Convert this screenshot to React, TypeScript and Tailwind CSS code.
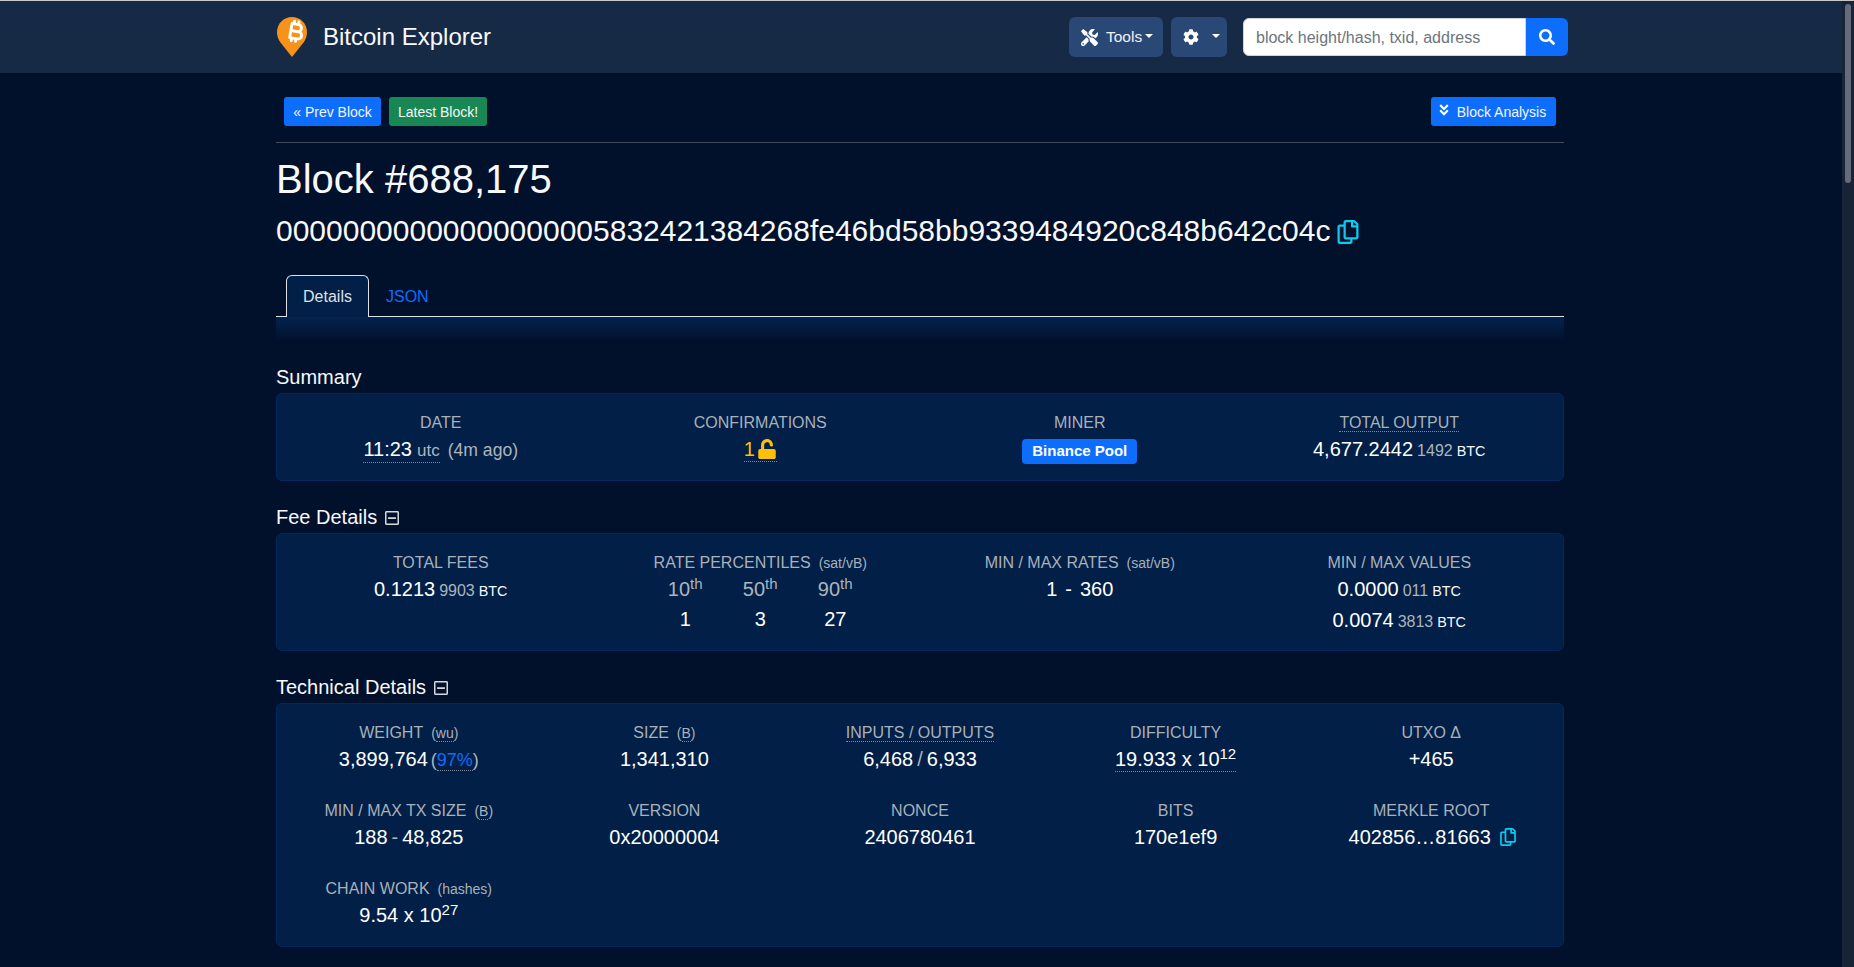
import { type ReactNode } from "react"
import { FaAngleDoubleDown, FaCog, FaRegCopy, FaRegMinusSquare, FaSearch, FaTools, FaUnlock } from "react-icons/fa"
import { FaBitcoinSign } from "react-icons/fa6"

function Caret() {
  return <span className="inline-block w-0 h-0 -mt-0.5 border-x-[4px] border-x-transparent border-t-[4px] border-t-white" />
}

function Label({ children, unit, dotted, unitDotted }: { children: ReactNode; unit?: string; dotted?: boolean; unitDotted?: boolean }) {
  return (
    <div className="text-[16px] leading-6 text-[#a9b1ba] whitespace-nowrap">
      <span className={dotted ? "border-b border-dotted border-[#7f8a99]" : ""}>{children}</span>
      {unit && (
        <span className="ml-2 text-[14px]">
          {unitDotted ? (
            <>
              (<span className="border-b border-dotted border-[#7f8a99]">{unit}</span>)
            </>
          ) : (
            `(${unit})`
          )}
        </span>
      )}
    </div>
  )
}

function Btc({ main, rest }: { main: string; rest: string }) {
  return (
    <span className="whitespace-nowrap">
      {main}
      <span className="ml-1 text-[16px] text-[#adb5bd]">{rest}</span>
      <span className="ml-1 text-[14.4px] text-[#f8f9fa]">BTC</span>
    </span>
  )
}

function SectionTitle({ children, toggle }: { children: ReactNode; toggle?: boolean }) {
  return (
    <div className="flex items-center gap-[7px] text-[20px] leading-6 text-[#f8f9fa]">
      {children}
      {toggle && <FaRegMinusSquare size={16} className="text-[#d5d9de] mt-0.5" />}
    </div>
  )
}

function Stat({ label, unit, dotted, unitDotted, children }: { label: string; unit?: string; dotted?: boolean; unitDotted?: boolean; children: ReactNode }) {
  return (
    <div className="text-center">
      <Label unit={unit} dotted={dotted} unitDotted={unitDotted}>{label}</Label>
      <div className="mt-[2px] text-[20px] leading-6 text-white">{children}</div>
    </div>
  )
}

const cardClass = "mt-1 rounded-[6px] border border-[#03285c] bg-[#011f47] px-1 pt-[17px] text-center"

export default function App() {
  return (
    <div className="flex h-screen overflow-hidden bg-[#01102b] font-['Liberation_Sans',Arial,sans-serif] text-white">
      <div className="flex-1 min-w-0">
        {/* Navbar */}
        <nav className="h-[73px] border-t border-[#c8c8c8] bg-[#172a45]">
          <div className="w-[1288px] ml-[276px] h-full flex items-center">
            <div className="relative w-[30px] h-[40px] ml-px mr-[16px]">
              <svg viewBox="0 0 30 40" className="w-[30px] h-[40px]">
                <path d="M15 0C6.7 0 0 6.7 0 15c0 4.2 1.4 7.4 3.5 10.6L15 40l11.5-14.4C28.6 22.4 30 19.2 30 15 30 6.7 23.3 0 15 0z" fill="#f7931a" />
              </svg>
              <FaBitcoinSign size={23} className="absolute left-[8px] top-[3px] rotate-[10deg] text-[#fff]" />
            </div>
            <span className="text-[24px] text-[#f8f9fa]">Bitcoin Explorer</span>
            <div className="ml-auto -mr-1 flex items-center">
              <button className="h-[40px] w-[94px] pl-3 rounded-[6px] bg-[#2a4875] flex items-center text-[15.5px] text-[#f0f3f7]">
                <FaTools size={17} className="text-white mr-2" />
                Tools
                <span className="ml-[3px] flex"><Caret /></span>
              </button>
              <button className="ml-2 h-[40px] w-[56px] pl-3 rounded-[6px] bg-[#2a4875] flex items-center gap-[13px]">
                <FaCog size={16} className="text-white" />
                <Caret />
              </button>
              <div className="ml-4 flex h-[38px]">
                <div className="w-[283px] rounded-l-[6px] bg-white border border-[#ced4da] flex items-center pl-3 pt-px text-[16px] text-[#6c757d]">
                  block height/hash, txid, address
                </div>
                <button className="w-[42px] rounded-r-[6px] bg-[#0d6efd] flex items-center justify-center">
                  <FaSearch size={16} className="text-white" />
                </button>
              </div>
            </div>
          </div>
        </nav>

        <div className="w-[1288px] ml-[276px]">
          {/* Block nav buttons */}
          <div className="mt-6 pb-4 px-2 flex gap-2 border-b border-[#3f4a5c] text-[14px] text-[#f4f6f9]">
            <button className="h-[29px] w-[97px] pt-px rounded-[3px] bg-[#0d6efd]">« Prev Block</button>
            <button className="h-[29px] w-[98px] pt-px rounded-[3px] bg-[#198754]">Latest Block!</button>
            <button className="ml-auto h-[29px] w-[125px] pt-px pr-[4px] rounded-[3px] bg-[#0d6efd] flex items-center justify-center gap-[6px]">
              <FaAngleDoubleDown size={14} className="text-white -mt-1" />
              Block Analysis
            </button>
          </div>

          <h1 className="mt-3 text-[40px] leading-[48px] text-[#f8f9fa]">Block #688,175</h1>
          <div className="mt-[10px] flex items-center gap-[6px] text-[30px] leading-9 text-[#f8f9fa]">
            00000000000000000005832421384268fe46bd58bb9339484920c848b642c04c
            <FaRegCopy size={24} className="text-[#0dcaf0] mt-0.5" />
          </div>

          {/* Tabs */}
          <div className="mt-[26px] h-[42px] px-[10px] flex border-b border-[#dee2e6]">
            <div className="h-[42px] w-[83px] rounded-t-[6px] border border-b-0 border-[#dee2e6] bg-[#011f47] flex items-center justify-center text-[16px] text-[#dee2e6]">
              Details
            </div>
            <div className="h-[41px] ml-[17px] pt-[2px] flex items-center text-[16px] text-[#0d6efd]">JSON</div>
          </div>
          <div className="h-6 bg-gradient-to-b from-[#03234f] to-transparent" />

          {/* Summary */}
          <div className="mt-6">
            <SectionTitle>Summary</SectionTitle>
            <div className={`${cardClass} h-[88px] grid grid-cols-4`}>
              <Stat label="DATE">
                <span className="inline-flex items-baseline border-b border-dotted border-[#7f8a99] leading-[23px]">
                  11:23<span className="ml-[5px] text-[17px] text-[#adb5bd]">utc</span>
                </span>
                <span className="ml-2 text-[17.6px] text-[#adb5bd]">(4m ago)</span>
              </Stat>
              <Stat label="CONFIRMATIONS">
                <span className="inline-flex items-center gap-[2px] border-b border-dotted border-[#7f8a99] leading-[23px] text-[#ffc107]">
                  1
                  <FaUnlock size={20} className="-mt-0.5" />
                </span>
              </Stat>
              <div className="text-center">
                <Label>MINER</Label>
                <span className="mt-[4px] inline-block h-[25px] w-[115px] rounded-[4px] bg-[#0d6efd] text-[15px] font-bold leading-[23px] text-white">
                  Binance Pool
                </span>
              </div>
              <Stat label="TOTAL OUTPUT" dotted>
                <Btc main="4,677.2442" rest="1492" />
              </Stat>
            </div>
          </div>

          {/* Fee Details */}
          <div className="mt-6">
            <SectionTitle toggle>Fee Details</SectionTitle>
            <div className={`${cardClass} h-[118px] grid grid-cols-4`}>
              <Stat label="TOTAL FEES">
                <Btc main="0.1213" rest="9903" />
              </Stat>
              <div className="text-center">
                <Label unit="sat/vB">RATE PERCENTILES</Label>
                <div className="mt-[2px] grid grid-cols-3 w-[225px] mx-auto text-[20px] leading-6">
                  <span className="text-[#adb5bd]">10<sup className="text-[15px]">th</sup></span>
                  <span className="text-[#adb5bd]">50<sup className="text-[15px]">th</sup></span>
                  <span className="text-[#adb5bd]">90<sup className="text-[15px]">th</sup></span>
                  <span className="mt-[6px]">1</span>
                  <span className="mt-[6px]">3</span>
                  <span className="mt-[6px]">27</span>
                </div>
              </div>
              <Stat label="MIN / MAX RATES" unit="sat/vB">
                <span>1<span className="mx-2">-</span>360</span>
              </Stat>
              <div className="text-center">
                <Label>MIN / MAX VALUES</Label>
                <div className="mt-[2px] text-[20px] leading-6"><Btc main="0.0000" rest="011" /></div>
                <div className="mt-[5px] text-[20px] leading-6"><Btc main="0.0074" rest="3813" /></div>
              </div>
            </div>
          </div>

          {/* Technical Details */}
          <div className="mt-6">
            <SectionTitle toggle>Technical Details</SectionTitle>
            <div className={`${cardClass} h-[244px] grid grid-cols-5 auto-rows-[78px] content-start`}>
              <Stat label="WEIGHT" unit="wu" unitDotted>
                3,899,764
                <span className="ml-[3px] text-[18px] text-[#adb5bd]">(<span className="text-[#0d6efd] border-b border-dotted border-[#7f8a99]">97%</span>)</span>
              </Stat>
              <Stat label="SIZE" unit="B" unitDotted>1,341,310</Stat>
              <Stat label="INPUTS / OUTPUTS" dotted>6,468<span className="mx-1 text-[#adb5bd]">/</span>6,933</Stat>
              <Stat label="DIFFICULTY">
                <span className="inline-block border-b border-dotted border-[#7f8a99] leading-[23px]">
                  19.933 x 10<sup className="text-[15px]">12</sup>
                </span>
              </Stat>
              <Stat label="UTXO Δ">+465</Stat>
              <Stat label="MIN / MAX TX SIZE" unit="B" unitDotted>188<span className="mx-1 text-[#adb5bd]">-</span>48,825</Stat>
              <Stat label="VERSION">0x20000004</Stat>
              <Stat label="NONCE">2406780461</Stat>
              <Stat label="BITS">170e1ef9</Stat>
              <Stat label="MERKLE ROOT">
                <span className="inline-flex items-center gap-2 pl-[3px]">
                  402856…81663
                  <FaRegCopy size={18} className="text-[#0dcaf0]" />
                </span>
              </Stat>
              <Stat label="CHAIN WORK" unit="hashes">9.54 x 10<sup className="text-[15px]">27</sup></Stat>
            </div>
          </div>
        </div>
      </div>

      {/* Scrollbar */}
      <div className="w-[12px] shrink-0 border-t border-[#c8c8c8] bg-[#172438] pt-[3px] flex justify-center">
        <div className="w-[6px] h-[179px] rounded-full bg-[#646c7c]" />
      </div>
    </div>
  )
}
